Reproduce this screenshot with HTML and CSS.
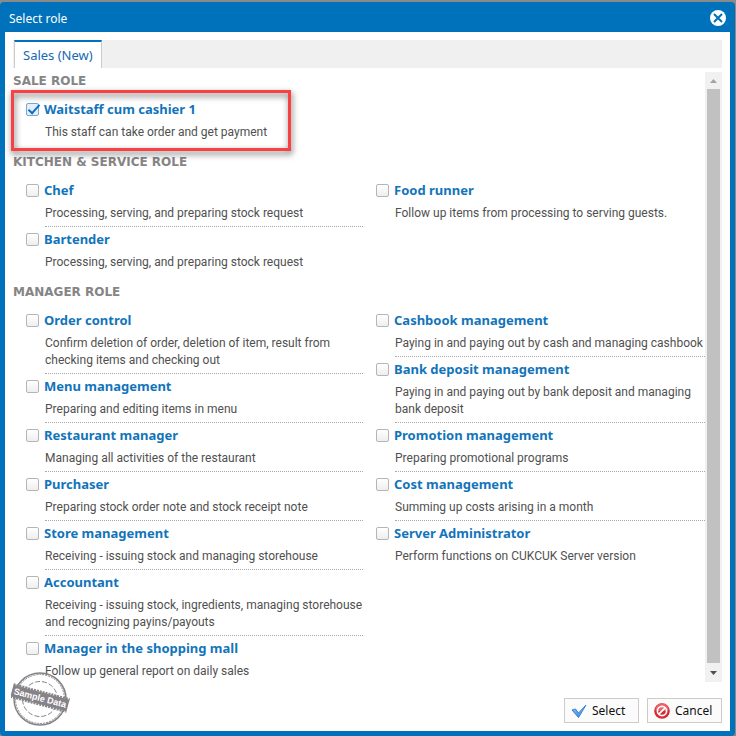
FILE: index.html
```html
<!DOCTYPE html>
<html lang="en">
<head>
<meta charset="utf-8">
<title>Select role</title>
<link rel="stylesheet" href="styles.css">
</head>
<body>
<main class="dialog">
  <header class="titlebar">
    <h1 class="title">Select role</h1>
    <button class="close" type="button" aria-label="Close">
      <svg width="16" height="16" viewBox="0 0 16 16"><circle cx="8" cy="8" r="8" fill="#fff"/><path d="M4 4l8 8M12 4l-8 8" stroke="#0072bc" stroke-width="2"/></svg>
    </button>
  </header>
  <div class="body">
    <nav class="tabs"><a class="tab" href="#sales">Sales (New)</a></nav>
    <div class="viewport" id="sales">
      <div class="list">
        <section class="group">
          <h2 class="heading">SALE ROLE</h2>
          <div class="columns">
            <div class="column">
              <div class="role marked"><input class="check" type="checkbox" id="r1" checked><label class="name" for="r1">Waitstaff cum cashier 1</label><p class="desc">This staff can take order and get payment</p></div>
            </div>
          </div>
        </section>
        <section class="group">
          <h2 class="heading">KITCHEN &amp; SERVICE ROLE</h2>
          <div class="columns">
            <div class="column">
              <div class="role"><input class="check" type="checkbox" id="r2"><label class="name" for="r2">Chef</label><p class="desc">Processing, serving, and preparing stock request</p></div>
              <div class="role"><input class="check" type="checkbox" id="r3"><label class="name" for="r3">Bartender</label><p class="desc">Processing, serving, and preparing stock request</p></div>
            </div>
            <div class="column">
              <div class="role"><input class="check" type="checkbox" id="r4"><label class="name" for="r4">Food runner</label><p class="desc">Follow up items from processing to serving guests.</p></div>
            </div>
          </div>
        </section>
        <section class="group">
          <h2 class="heading">MANAGER ROLE</h2>
          <div class="columns">
            <div class="column">
              <div class="role"><input class="check" type="checkbox" id="r5"><label class="name" for="r5">Order control</label><p class="desc">Confirm deletion of order, deletion of item, result from checking items and checking out</p></div>
              <div class="role"><input class="check" type="checkbox" id="r6"><label class="name" for="r6">Menu management</label><p class="desc">Preparing and editing items in menu</p></div>
              <div class="role"><input class="check" type="checkbox" id="r7"><label class="name" for="r7">Restaurant manager</label><p class="desc">Managing all activities of the restaurant</p></div>
              <div class="role"><input class="check" type="checkbox" id="r8"><label class="name" for="r8">Purchaser</label><p class="desc">Preparing stock order note and stock receipt note</p></div>
              <div class="role"><input class="check" type="checkbox" id="r9"><label class="name" for="r9">Store management</label><p class="desc">Receiving - issuing stock and managing storehouse</p></div>
              <div class="role"><input class="check" type="checkbox" id="r10"><label class="name" for="r10">Accountant</label><p class="desc">Receiving - issuing stock, ingredients, managing storehouse and recognizing payins/payouts</p></div>
              <div class="role"><input class="check" type="checkbox" id="r11"><label class="name" for="r11">Manager in the shopping mall</label><p class="desc">Follow up general report on daily sales</p></div>
            </div>
            <div class="column">
              <div class="role"><input class="check" type="checkbox" id="r12"><label class="name" for="r12">Cashbook management</label><p class="desc">Paying in and paying out by cash and managing cashbook</p></div>
              <div class="role"><input class="check" type="checkbox" id="r13"><label class="name" for="r13">Bank deposit management</label><p class="desc">Paying in and paying out by bank deposit and managing bank deposit</p></div>
              <div class="role"><input class="check" type="checkbox" id="r14"><label class="name" for="r14">Promotion management</label><p class="desc">Preparing promotional programs</p></div>
              <div class="role"><input class="check" type="checkbox" id="r15"><label class="name" for="r15">Cost management</label><p class="desc">Summing up costs arising in a month</p></div>
              <div class="role"><input class="check" type="checkbox" id="r16"><label class="name" for="r16">Server Administrator</label><p class="desc">Perform functions on CUKCUK Server version</p></div>
            </div>
          </div>
        </section>
      </div>
      <div class="scrollbar" aria-hidden="true">
        <svg class="arrow" width="17" height="17" viewBox="0 0 17 17"><path d="M5 11l3.500-4 3.500 4z" fill="#a3a3a3"/></svg>
        <div class="thumb"></div>
        <svg class="arrow" width="17" height="19" viewBox="0 0 17 19"><path d="M5 8l3.500 4L12 8z" fill="#505050"/></svg>
      </div>
    </div>
    <footer class="actions">
      <button class="button" type="button">
        <svg width="16" height="16" viewBox="0 0 16 16"><defs><linearGradient id="blue" x1="0" y1="0" x2="0" y2="1"><stop offset="0" stop-color="#9ad0f8"/><stop offset="1" stop-color="#3a88dc"/></linearGradient></defs><path d="M1 7l3.500-1 3 4 7.500-8-7.500 12.500z" fill="url(#blue)" stroke="#3380d4" stroke-linejoin="round"/></svg>
        Select
      </button>
      <button class="button" type="button">
        <svg width="16" height="16" viewBox="0 0 16 16"><circle cx="8" cy="8" r="7.800" fill="#d42a30"/><path d="M1.200 7a6.800 6.800 0 0 1 13.600 0q-7 2-13.600 0z" fill="#ea6265"/><circle cx="8" cy="8" r="4.600" fill="none" stroke="#fff" stroke-width="1.700"/><path d="M4.800 11.200l6.400-6.400" stroke="#fff" stroke-width="1.700"/></svg>
        Cancel
      </button>
    </footer>
  </div>
  <svg class="stamp" width="62" height="58" viewBox="0 0 62 58" role="img" aria-label="Sample Data">
    <g fill="none" stroke="#858387">
      <circle cx="29" cy="29" r="26" stroke-width="1.500"/>
      <circle cx="29" cy="29" r="24.500" stroke-width="1" stroke-dasharray="2 1"/>
      <circle cx="29" cy="29" r="17.500" stroke-width="1" stroke-dasharray="5 2"/>
    </g>
    <g transform="rotate(15 29 28)">
      <path d="M0 21.500h58M0 34.500h58" stroke="#858387" stroke-width="2" stroke-dasharray="2 1"/>
      <path d="M0 22h58v12H0z" fill="#858387"/>
      <text x="29" y="31" class="stamp-text">Sample Data</text>
    </g>
  </svg>
</main>
</body>
</html>
```
FILE: styles.css
```css
* { box-sizing: border-box; }
body {
  margin: 0;
  background: #8a8a8a;
  font: 12px/17px "Noto Sans", "Open Sans", sans-serif;
  color: #505050;
}
h1, h2, p { margin: 0; }
button { font: inherit; cursor: pointer; }

.dialog {
  position: relative;
  display: flex;
  flex-direction: column;
  min-height: calc(100vh - 2px);
  margin: 2px 1px 0 0;
  padding: 0 5px 5px;
  background: #0072bc;
  border-radius: 4px;
}
.titlebar {
  display: flex;
  align-items: center;
  justify-content: space-between;
  height: 32px;
  margin-bottom: -2px;
  padding: 0 4px;
}
.title { font-size: 12px; font-weight: 400; color: #fff; }
.close { display: flex; padding: 0; border: 0; background: none; }

.body {
  flex: 1;
  display: flex;
  flex-direction: column;
  background: #fff;
  padding: 8px 8px 8px 0;
}
.tabs {
  display: flex;
  height: 28px;
  margin-left: 8px;
  padding-left: 1px;
  background: #f0f0f0;
}
.tab {
  padding: 5px 8px 0;
  border: 1px solid #ccc;
  border-width: 0 1px;
  border-top: 2px solid #0072bc;
  background: #fff;
  font-size: 13px;
  color: #1569b3;
  text-decoration: none;
}
.viewport {
  flex: 1 0 610px;
  display: flex;
  height: 610px;
  margin-top: 4px;
}
.list { flex: 1; min-width: 0; overflow: hidden; padding-left: 8px; }
.group + .group { margin-top: 7px; }
.heading {
  padding: 1px 0 8px;
  font: 700 12px/16px "DejaVu Sans", sans-serif;
  color: #858585;
}
.columns {
  display: grid;
  grid-template-columns: 350fr 342fr;
}
.column { min-width: 0; }
.role {
  position: relative;
  display: grid;
  grid-template-columns: 13px 1fr;
  column-gap: 5px;
  align-items: center;
  margin-left: 13px;
  padding-top: 3px;
}
.name {
  justify-self: start;
  font-size: 13px;
  line-height: 18px;
  font-weight: 700;
  color: #1274ba;
}
.desc {
  grid-column: 2;
  margin: 6px 0 0 1px;
  padding-bottom: 4px;
  border-bottom: 1px dotted #aaa;
  font-family: Roboto, sans-serif;
}
.role:last-child .desc { border-color: transparent; }
.check {
  appearance: none;
  width: 13px;
  height: 13px;
  margin: 0;
  border: 1px solid #b5b5b5;
  border-radius: 2px;
  background: linear-gradient(#fff, #eee);
}
.check:checked { position: relative; border-color: #7ba7cf; background: #e4eff8; }
.check:checked::after {
  content: "";
  position: absolute;
  left: 4px;
  top: -2px;
  width: 6px;
  height: 12px;
  box-sizing: border-box;
  border: solid #0b6fc4;
  border-width: 0 2px 2px 0;
  transform: rotate(42deg);
}
.marked::after {
  content: "";
  position: absolute;
  top: -7px;
  left: -15px;
  box-sizing: border-box;
  width: 280px;
  height: 61px;
  border: 3px solid #f94144;
  filter: drop-shadow(1px 3px 3px rgba(0, 0, 0, .6));
  pointer-events: none;
}

.scrollbar {
  display: flex;
  flex-direction: column;
  width: 17px;
  background: #f1f1f1;
}
.arrow { display: block; flex: none; }
.thumb { flex: 1; margin: 0 2px; background: #c1c1c1; }

.actions {
  display: flex;
  justify-content: flex-end;
  gap: 8px;
  margin-top: 16px;
}
.button {
  display: flex;
  align-items: center;
  gap: 5px;
  width: 75px;
  height: 25px;
  padding: 0 6px;
  border: 1px solid #ccc;
  background: #fbfbfb;
  color: #111;
}
.stamp { position: absolute; left: 11px; bottom: 8px; }
.stamp-text {
  font: 700 9px "Liberation Sans", sans-serif;
  fill: #fff;
  text-anchor: middle;
}
```
